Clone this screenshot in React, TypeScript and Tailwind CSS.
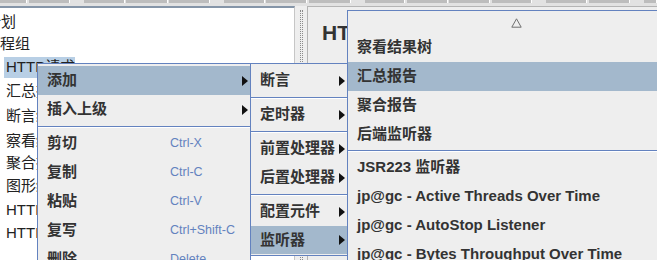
import React from "react";

const FONT = "font-['Liberation_Sans','Noto_Sans_CJK_SC',sans-serif]";

const treeRows: { label: string; h: string; pl: string; selected?: boolean }[] = [
  { label: "测试计划", h: "h-[22px]", pl: "ml-[-44px]" },
  { label: "线程组", h: "h-[23px]", pl: "ml-[-15px]" },
  { label: "HTTP请求", h: "h-[23px]", pl: "ml-[4px]", selected: true },
  { label: "汇总报告", h: "h-[24px]", pl: "ml-[6px]" },
  { label: "断言结果", h: "h-[26px]", pl: "ml-[6px]" },
  { label: "察看结果树", h: "h-[24px]", pl: "ml-[6px]" },
  { label: "聚合报告", h: "h-[21px]", pl: "ml-[6px]" },
  { label: "图形结果", h: "h-[24px]", pl: "ml-[6px]" },
  { label: "HTTP请求", h: "h-[24px]", pl: "ml-[6px]" },
  { label: "HTTP请求", h: "h-[23px]", pl: "ml-[6px]" },
];

// toolbar edge peeking out at the very top
const strip = [
  [0, 27], [29, 70], [84, 125], [126, 168], [169, 210], [224, 265], [266, 307],
  [309, 351], [365, 405], [407, 448], [449, 490], [492, 532], [546, 587], [589, 630], [644, 657],
];

export default function App() {
  return (
    <div className={`relative w-[657px] h-[260px] overflow-hidden bg-[#eeeeee] ${FONT}`}>
      <div className="flex h-[6px] bg-[#e2e2e2]">
        {strip.map(([a, b], i) => (
          <div
            key={i}
            className="h-[3px] bg-[#bdbdbd] border-r border-white"
            style={{ marginLeft: i === 0 ? 0 : a - strip[i - 1][1], width: b - a }}
          />
        ))}
      </div>

      <div className="flex h-[254px]">
        {/* tree */}
        <div className="w-[295px] bg-white border-t-2 border-[#8595a8] border-r border-r-[#c6c6c6] pt-[3px] overflow-hidden">
          {treeRows.map((r, i) => (
            <div key={i} className={`${r.h} flex items-center whitespace-nowrap`}>
              {r.selected ? (
                <span className={`${r.pl} h-[21px] w-[71px] pl-[2px] flex items-center bg-[#b8cfe5] text-[15px] text-[#222]`}>
                  {r.label}
                </span>
              ) : (
                <span className={`${r.pl} text-[15px] text-[#222]`}>{r.label}</span>
              )}
            </div>
          ))}
        </div>

        {/* splitter */}
        <div className="w-[12px] flex justify-center gap-[1px] pt-[4px]">
          <div className="h-full border-l border-dotted border-[#8a8a8a]" />
          <div className="h-full border-l border-dotted border-[#8a8a8a]" />
        </div>

        {/* editor panel */}
        <div className="flex-1 border-l border-t border-[#b4b4b4] pl-[14px] pt-[14px]">
          <div className="text-[21px] font-bold text-[#333] leading-[24px] whitespace-nowrap">HTTP请求</div>
        </div>
      </div>

      {/* context menu */}
      <Menu className="left-[37px] top-[63px] w-[214px] h-[220px]">
        <Item label="添加" active sub />
        <Item label="插入上级" sub />
        <Sep />
        <Item label="剪切" accel="Ctrl-X" />
        <Item label="复制" accel="Ctrl-C" />
        <Item label="粘贴" accel="Ctrl-V" />
        <Item label="复写" accel="Ctrl+Shift-C" />
        <Item label="删除" accel="Delete" />
      </Menu>

      {/* 添加 submenu */}
      <Menu className="left-[250px] top-[63px] w-[98px] pb-[1px]">
        <Item label="断言" sub />
        <Sep />
        <Item label="定时器" sub />
        <Sep />
        <Item label="前置处理器" sub />
        <Item label="后置处理器" sub />
        <Sep />
        <Item label="配置元件" sub />
        <Item label="监听器" sub active h="h-[28px]" />
      </Menu>

      {/* 监听器 submenu */}
      <Menu className="left-[347px] top-[10px] w-[338px] h-[300px] pt-0">
        <div className="h-[20px] flex items-center justify-center">
          <svg width="11" height="10" viewBox="0 0 11 10">
            <path d="M5.5 0.8 L10.2 9.2 L0.8 9.2 Z" fill="none" stroke="#6f6f6f" strokeWidth="1" />
          </svg>
        </div>
        <Item label="察看结果树" />
        <Item label="汇总报告" active />
        <Item label="聚合报告" />
        <Item label="后端监听器" />
        <Sep h="h-[4px]" />
        <Item label="JSR223 监听器" />
        <Item label="jp@gc - Active Threads Over Time" />
        <Item label="jp@gc - AutoStop Listener" />
        <Item label="jp@gc - Bytes Throughput Over Time" />
      </Menu>
    </div>
  );
}

function Menu({ className, children }: { className: string; children: React.ReactNode }) {
  return (
    <div className={`absolute bg-[#eeeeee] border border-[#6382bf] pt-[2px] flex flex-col ${className}`}>
      {children}
    </div>
  );
}

function Sep({ h = "h-[5px]" }: { h?: string }) {
  return (
    <div className={`${h} flex flex-col justify-center`}>
      <div className="h-[1px] bg-[#6382bf]" />
      <div className="h-[1px] bg-white" />
    </div>
  );
}

function Item({
  label,
  accel,
  sub,
  active,
  h = "h-[29px]",
}: {
  label: string;
  accel?: string;
  sub?: boolean;
  active?: boolean;
  h?: string;
}) {
  return (
    <div
      className={`${h} shrink-0 flex items-center pl-[9px] pr-[2px] whitespace-nowrap ${active ? "bg-[#a3b8cc]" : ""}`}
    >
      <span className={`${accel ? "w-[123px]" : ""} text-[15px] font-bold text-[#333]`}>{label}</span>
      {accel && <span className="text-[12.5px] text-[#6382bf]">{accel}</span>}
      {sub && (
        <svg className="ml-auto" width="6" height="10" viewBox="0 0 6 10">
          <path d="M0 0 L6 5 L0 10 Z" fill="#111" />
        </svg>
      )}
    </div>
  );
}
